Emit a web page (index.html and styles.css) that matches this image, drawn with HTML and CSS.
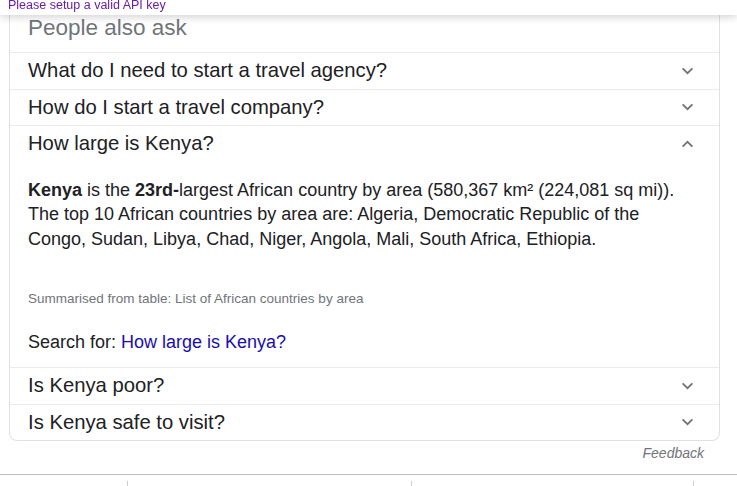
FILE: index.html
```html
<!DOCTYPE html>
<html>
<head>
<meta charset="utf-8">
<link rel="stylesheet" href="styles.css">
</head>
<body>
<div class="topbar"><span class="apimsg">Please setup a valid API key</span></div>
<div class="page">
  <div class="card">
    <div class="head">People also ask</div>
    <div class="row"><span class="q">What do I need to start a travel agency?</span><svg class="chev" viewBox="0 0 14 9"><path d="M1.5 1.5 7 7l5.5-5.5"/></svg></div>
    <div class="row"><span class="q">How do I start a travel company?</span><svg class="chev" viewBox="0 0 14 9"><path d="M1.5 1.5 7 7l5.5-5.5"/></svg></div>
    <div class="row open"><span class="q">How large is Kenya?</span><svg class="chev" viewBox="0 0 14 9"><path d="M1.5 7.5 7 2l5.5 5.5"/></svg></div>
    <div class="answer">
      <p class="text"><b>Kenya</b> is the <b>23rd-</b>largest African country by area (580,367 km² (224,081 sq mi)). The top 10 African countries by area are: Algeria, Democratic Republic of the Congo, Sudan, Libya, Chad, Niger, Angola, Mali, South Africa, Ethiopia.</p>
      <p class="source">Summarised from table: List of African countries by area</p>
      <p class="search">Search for: <a class="link">How large is Kenya?</a></p>
    </div>
    <div class="row"><span class="q">Is Kenya poor?</span><svg class="chev" viewBox="0 0 14 9"><path d="M1.5 1.5 7 7l5.5-5.5"/></svg></div>
    <div class="row last"><span class="q">Is Kenya safe to visit?</span><svg class="chev" viewBox="0 0 14 9"><path d="M1.5 1.5 7 7l5.5-5.5"/></svg></div>
  </div>
  <div class="feedback">Feedback</div>
</div>
<div class="footer">
  <div class="ticks"><span class="tick"></span><span class="tick"></span><span class="tick"></span></div>
</div>
</body>
</html>
```
FILE: styles.css
```css
html, body {
  margin: 0;
  padding: 0;
  background: #fff;
  font-family: "Liberation Sans", Arial, sans-serif;
  color: #202124;
  overflow: hidden;
}
.topbar {
  position: fixed;
  top: 0;
  left: 0;
  right: 0;
  height: 15px;
  background: #fff;
  box-shadow: 0 2px 8px rgba(0,0,0,0.18);
  z-index: 5;
  overflow: hidden;
}
.apimsg {
  display: block;
  margin: -2px 0 0 8px;
  font-size: 12.5px;
  line-height: 14px;
  color: #681da8;
}
.page {
  padding: 0 17px 0 9px;
}
.card {
  border: 1px solid #dfe1e5;
  border-top: none;
  border-radius: 0 0 8px 8px;
}
.head {
  height: 53px;
  box-sizing: border-box;
  padding: 14px 0 0 18px;
  font-size: 22.5px;
  line-height: 28px;
  color: #70757a;
  border-bottom: 1px solid #ebebeb;
}
.row {
  display: flex;
  align-items: center;
  justify-content: space-between;
  height: 35.5px;
  padding: 0 25px 0 18px;
  border-bottom: 1px solid #ebebeb;
}
.row.open {
  border-bottom: none;
}
.row.last {
  border-bottom: none;
}
.q {
  font-size: 20.25px;
  color: #202124;
}
.chev {
  width: 13px;
  height: 8px;
  fill: none;
  stroke: #70757a;
  stroke-width: 2;
}
.answer {
  padding: 16px 30px 15px 18px;
  border-bottom: 1px solid #ebebeb;
}
.text {
  margin: 0;
  font-size: 18px;
  line-height: 24.5px;
  color: #202124;
}
.source {
  margin: 40px 0 0 0;
  font-size: 13.5px;
  line-height: 16px;
  color: #70757a;
}
.search {
  margin: 25px 0 0 0;
  font-size: 18px;
  line-height: 20px;
}
.link {
  color: #1a0dab;
}
.feedback {
  text-align: right;
  font-size: 14px;
  font-style: italic;
  color: #70757a;
  padding: 4px 16px 0 0;
  line-height: 16px;
}
.footer {
  margin-top: 13px;
  border-top: 1px solid #bdbdbd;
  height: 20px;
}
.ticks {
  position: relative;
  height: 20px;
}
.tick {
  position: absolute;
  top: 6px;
  width: 1px;
  height: 6px;
  background: #ccc;
}
.tick:nth-child(1) { left: 127px; }
.tick:nth-child(2) { left: 411px; }
.tick:nth-child(3) { left: 693px; }
```
